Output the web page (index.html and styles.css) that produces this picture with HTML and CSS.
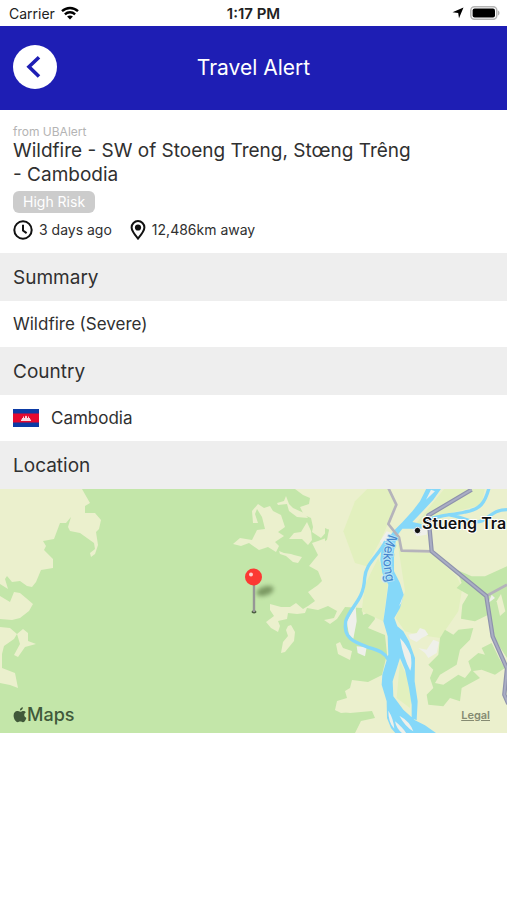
FILE: index.html
```
<!DOCTYPE html>
<html lang="en">
<head>
  <meta charset="UTF-8">
  <meta name="viewport" content="width=device-width, initial-scale=1.0">
  <title>Travel Alert</title>
  <link rel="stylesheet" href="styles.css">
</head>
<body>

  <!-- Status bar -->
  <div class="status-bar">
    <div class="carrier">
      <span>Carrier</span>
      <svg width="18" height="14" viewBox="0 0 18 14" fill="none" stroke="#000" stroke-width="2.4">
        <path d="M1 5.200C5.600.900 12.400.900 17 5.200"/>
        <path d="M3.900 8.300c2.900-2.700 7.300-2.700 10.200 0"/>
        <path d="M9 13.600l-2.900-3c1.700-1.500 4.100-1.500 5.800 0z" fill="#000" stroke="none"/>
      </svg>
    </div>
    <div class="time">1:17 PM</div>
    <div class="indicators">
      <svg width="12" height="12" viewBox="0 0 12 12"><path d="M11.500.5L7 11.300 6.200 6 .5 5.200z" fill="#000"/></svg>
      <svg width="30" height="14" viewBox="0 0 30 14">
        <rect x=".8" y=".8" width="26" height="12.400" rx="3.600" fill="#fff" stroke="#b5b5b5" stroke-width="1.500"/>
        <rect x="2.600" y="2.400" width="22.400" height="9.200" rx="2" fill="#000"/>
        <path d="M28 4.500c2 .8 2 4.200 0 5z" fill="#b5b5b5"/>
      </svg>
    </div>
  </div>

  <!-- Header -->
  <header class="navbar">
    <button class="back-btn" aria-label="Back">
      <svg width="44" height="44" viewBox="0 0 44 44" fill="none" stroke="#1e1eb4" stroke-width="3.600"><path d="M26 12.200L16 21.800l10 9.700"/></svg>
    </button>
    <h1>Travel Alert</h1>
  </header>

  <main>
    <!-- Alert -->
    <section class="alert">
      <p class="source">from UBAlert</p>
      <h2>Wildfire - SW of Stoeng Treng, Stœng Trêng - Cambodia</h2>
      <span class="badge">High Risk</span>
      <div class="meta">
        <div class="meta-item">
          <svg width="20" height="20" viewBox="0 0 20 20" fill="none" stroke="#111" stroke-width="2"><circle cx="10" cy="10" r="8.700"/><path d="M10 4.800v5.700l3.600 2.600"/></svg>
          <span>3 days ago</span>
        </div>
        <div class="meta-item">
          <svg width="16" height="20" viewBox="0 0 16 20"><path d="M8 18.600C5.500 15.600 1.600 11 1.600 7.500a6.400 6.400 0 0 1 12.800 0C14.400 11 10.500 15.600 8 18.600z" fill="none" stroke="#111" stroke-width="2"/><circle cx="8" cy="7.500" r="3.100" fill="#111"/></svg>
          <span>12,486km away</span>
        </div>
      </div>
    </section>

    <h3>Summary</h3>
    <p class="row">Wildfire (Severe)</p>

    <h3>Country</h3>
    <div class="row">
      <svg class="flag" width="26" height="18" viewBox="0 0 26 18">
        <rect width="26" height="18" fill="#0c3ba5"/>
        <rect y="4.500" width="26" height="9" fill="#e5092f"/>
        <path d="M8 12v-1.500h1V9h1V7.500h1V9h1V7.500l1-1 1 1V9h1V7.500h1V9h1v1.500h1V12z" fill="#fff" opacity=".85"/>
      </svg>
      <span>Cambodia</span>
    </div>

    <h3>Location</h3>
    <div class="map">
      <svg class="map-canvas" viewBox="0 0 507 244" preserveAspectRatio="xMidYMid slice">
        <defs>
          <filter id="soft" x="-50%" y="-50%" width="200%" height="200%"><feGaussianBlur stdDeviation="2"/></filter>
          <path id="mekong" d="M389 45C382 62 382 76 387 96"/>
        </defs>
        <rect width="507" height="244" fill="#c3e6a9"/>

        <!-- open land -->
        <g fill="#ebf0cd">
          <path d="M0 0H82L90 14 85 17V24L95 24 101 31 99 40 96 43 98 56 95 65 91 68 90 64 95 60 94 54 80 44 70 42 68 38 71 28 66 34 60 34 54 50 43 52 46 57 44 61 53 70V79L41 81 36 93 32 98 27 97 20 92 12 93 7 87 5 90 8 100 0 95Z"/>
          <path d="M0 107L10 113 14 103 20 104 26 109 33 115 29 122 20 129 12 131 0 130Z"/>
          <path d="M0 138L10 139 17 145 14 150 4 157 2 165V179L15 184 18 199 10 196 0 194Z"/>
          <path d="M17 145L23 140 28 144V152L36 155 25 158 18 168 14 166 20 155Z"/>
          <path d="M253 34L252 22 258 15 264 19 270 17 273 22 281 26 285 38 278 43 284 47 275 53 279 57 276 63 268 58 259 61 249 54 241 57 233 55 240 49 252 51 257 41 265 40 262 28 257 20 255 25 258 34Z"/>
          <path d="M277 14L284 12 286 7 289 15 293 19 304 24 308 29 297 28 289 22 287 15 278 16Z"/>
          <path d="M289 50L294 44 301 43 307 33 311 42 312 51 308 56 302 50Z"/>
          <path d="M279 62L284 64 291 65 294 66 302 68 298 74 293 73 286 67 280 65Z"/>
          <path d="M288 137L291 136 295 143 294 152 285 163 281 164 283 153 288 147 286 141Z"/>
          <path d="M295 0L303 6 310 9 309 15 300 18 304 26 311 29 313 38 312 43 321 49 329 40 326 49 318 52 312 54 318 66 309 77 318 82 322 92 318 96 308 103 315 112 308 117 303 120 296 114 290 118 281 118 270 115 270 121 274 127 266 133 271 139 278 143 280 137 278 132 287 130 288 124 297 125 305 124 307 119 318 121 328 117 337 122 334 129 324 131 330 135 337 130 345 118 362 119 363 126 373 121 375 130 368 139 385 146 387 165 382 186 368 193 352 191 350 199 345 202 347 209 337 212 335 221 350 224 372 222 375 229 361 232 355 244H507V0Z"/>
          <path d="M336 155L340 153 343 159 352 162 350 171 338 165ZM335 221L345 213 352 206V223L341 224Z"/>
        </g>

        <!-- Mekong side, drawn on its own grid -->
        <g transform="translate(325 -1) scale(.3333)">
          <g fill="#e2f0be">
            <path d="M130 0H190L212 50 190 105 170 150 125 235 90 225 55 130 90 40Z"/>
            <path d="M160 210L188 290 175 400 110 370 120 290Z"/>
            <path d="M215 145L230 190 320 195 395 265 412 300 400 370 345 450 280 440 240 430 212 390 240 310Z"/>
            <path d="M360 0H480L470 50 360 80 330 110 270 110Z"/>
            <path d="M225 520L262 600 255 660 215 630Z"/>
          </g>

          <!-- woods -->
          <g fill="#c3e6a9">
            <path d="M395 245L440 265 480 265 546 235V510L520 470 502 440 490 380 450 400 408 392 412 350 430 320 395 300 410 285Z"/>
            <path d="M360 425L385 440 400 425 445 420 435 455 405 485 395 530 345 560 330 585 355 590 400 560 420 570 440 545 465 570 410 600 405 640 375 630 355 655 310 650 305 620 325 600 315 570 325 545 310 530 340 500 345 450Z"/>
            <path d="M430 520L460 495 480 500 470 480 500 465 522 510 540 540 510 560 470 545 440 550Z"/>
            <path d="M0 120L12 125 6 155 0 160Z"/>
          </g>
          <path d="M515 340L528 318 541 370 525 384Z" fill="#ebf0cd"/>

          <!-- built-up land -->
          <g fill="#eff0ea">
            <path d="M250 440L275 435 285 420 300 425 310 440 290 450 275 462 255 452ZM280 480L305 485 325 455 342 462 335 495 310 510 300 495ZM95 475L125 478 120 505 98 495ZM165 160L185 130 200 135 175 175ZM262 125L275 110 310 118 305 140 275 145Z"/>
            <path d="M92 355L65 400 72 440 85 452 95 400ZM500 320L490 345 510 330Z"/>
          </g>

          <!-- rivers -->
          <path fill="#85d8f9" d="M305 0L285 40 262 70 232 103 205 130 170 180 166 215 172 255 190 290 180 365 175 400 188 445 190 500 172 560 170 590 185 640 186 690 198 720 215 740H340L300 712 270 697 235 665 205 625 203 580 225 510 240 545 252 600 260 650 260 690 275 697 278 640 269 580 270 510 252 460 235 430 217 415 208 390 225 360 236 320 225 285 207 250 207 190 215 145 232 122 290 122 290 108 262 102 300 62 325 35 350 0Z"/>
          <g fill="none" stroke="#85d8f9" stroke-linejoin="round">
            <path d="M182 160C160 205 122 225 119 270 116 340 75 355 62 400 54 450 85 462 130 478 165 488 180 495 190 515" stroke-width="10"/>
            <path d="M310 95C350 80 380 82 420 72 465 65 480 45 492 0M370 80C400 85 420 95 440 100 490 110 490 65 546 65" stroke-width="10"/>
          </g>
          <g fill="#eff0ea">
            <path d="M225 450Q245 470 257 500 262 530 256 548 235 510 225 450ZM190 668Q205 690 208 722 190 705 190 668ZM223 683Q255 700 265 730 240 715 223 683ZM303 35L318 5 330 10ZM222 355L235 322 229 345Z"/>
            <path d="M210 700Q235 720 245 738H235Q215 725 210 700Z"/>
          </g>

          <!-- roads -->
          <g fill="none" stroke-linejoin="round">
            <path d="M190 0L214 50 190 108 222 148 230 188 320 190M484 324L546 290" stroke="#b5b3bb" stroke-width="8"/>
            <path d="M440 5L310 82 320 190 484 324 503 445 546 542 538 620 550 648" stroke="#8e92ac" stroke-width="13"/>
            <path d="M440 5L310 82 320 190 484 324 503 445 546 542 538 620 550 648" stroke="#a9adc4" stroke-width="6"/>
          </g>
        </g>
        <circle cx="417.500" cy="41.500" r="3.200" fill="#111" stroke="#fff" stroke-width="1"/>
        <text class="city" x="422" y="40">Stueng Tra</text>
        <text class="river"><textPath href="#mekong">Mekong</textPath></text>

        <!-- pin -->
        <ellipse cx="265" cy="102" rx="9" ry="4.500" fill="#54703e" opacity=".65" transform="rotate(-18 265 102)" filter="url(#soft)"/>
        <ellipse cx="254" cy="123" rx="2.500" ry="1.400" fill="#4c5e42"/>
        <path d="M254 94V123" stroke="#969696" stroke-width="2.400"/>
        <circle cx="253.500" cy="88" r="8.500" fill="#fc3933"/>
        <circle cx="251" cy="85.500" r="2" fill="#ffd0cc"/>
      </svg>
      <div class="map-logo">
        <svg width="14" height="16" viewBox="0 0 14 16" fill="#40593a"><path d="M9.900.300c.1 1.700-1.300 3.200-3 3.200C6.800 1.900 8.200.500 9.900.300zM12.800 5.300c-2.300 1.500-1.900 4.500.6 5.600-.7 2-2 4.300-3.500 4.300-1 0-1.400-.6-2.600-.6s-1.700.6-2.600.6C2.600 15.200.6 11.600.6 8.600c0-2.900 1.800-4.500 3.600-4.500 1.200 0 2 .7 3 .7s1.800-.8 3.200-.8c1 0 1.900.5 2.400 1.300z"/></svg>
        <span>Maps</span>
      </div>
      <a class="legal" href="#">Legal</a>
    </div>
  </main>

</body>
</html>
```
FILE: styles.css
```
/* === RESET & BASE === */
* { margin: 0; padding: 0; box-sizing: border-box; }

:root {
  --primary: #1e1eb4;
  --text: #303030;
  --section: #eee;
}

body {
  font-family: Inter, "Liberation Sans", sans-serif;
  background: #fff;
  color: var(--text);
}

svg { display: block; }

/* === STATUS BAR === */
.status-bar {
  display: grid;
  grid-template-columns: 1fr auto 1fr;
  align-items: center;
  height: 26px;
  padding: 0 7px;
  font-size: 14px;
  color: #222;
}

.carrier,
.indicators {
  display: flex;
  align-items: center;
  gap: 6px;
}

.carrier { padding-left: 2px; }

.indicators { justify-content: flex-end; }

.time {
  font-weight: 600;
  font-size: 15px;
}

/* === HEADER === */
.navbar {
  display: grid;
  grid-template-columns: 44px 1fr 44px;
  align-items: center;
  height: 84px;
  padding: 0 13px 2px;
  background: var(--primary);
  color: #fff;
}

.navbar h1 {
  font-size: 21px;
  font-weight: 400;
  text-align: center;
}

.back-btn {
  width: 44px;
  height: 44px;
  border: none;
  border-radius: 50%;
  background: #fff;
  cursor: pointer;
}

/* === ALERT === */
.alert { padding: 15px 90px 13px 13px; }

.source {
  font-size: 12px;
  line-height: 14px;
  color: #b4b4b4;
}

.alert h2 {
  font-size: 19px;
  font-weight: 400;
  line-height: 24px;
}

.badge {
  display: block;
  width: fit-content;
  margin-top: 4px;
  padding: 0 10px;
  border-radius: 6px;
  background: #ccc;
  color: #fff;
  font-size: 14px;
  line-height: 22px;
}

.meta {
  display: flex;
  gap: 18px;
  margin-top: 7px;
  font-size: 14px;
  line-height: 20px;
}

.meta-item {
  display: flex;
  align-items: center;
  gap: 6px;
  white-space: nowrap;
}

/* === SECTIONS === */
h3 {
  padding: 1px 13px 0;
  background: var(--section);
  font-size: 19px;
  font-weight: 400;
  line-height: 47px;
}

.row {
  display: flex;
  align-items: center;
  gap: 12px;
  padding: 0 13px;
  font-size: 17px;
  line-height: 46px;
}

/* === MAP === */
.map {
  position: relative;
  height: 244px;
}

.map-canvas {
  width: 100%;
  height: 100%;
}

.city {
  font-size: 16px;
  font-weight: 600;
  fill: #111;
  stroke: #fff;
  stroke-width: 2px;
  paint-order: stroke;
}

.river {
  font-size: 13px;
  fill: #4585cc;
  stroke: #b5e3f6;
  stroke-width: 2px;
  paint-order: stroke;
}

.map-logo {
  position: absolute;
  left: 13px;
  bottom: 8px;
  display: flex;
  align-items: center;
  font-size: 18px;
  font-weight: 500;
  color: #40593a;
}

.legal {
  position: absolute;
  right: 17px;
  bottom: 11px;
  font-size: 11px;
  font-weight: 600;
  color: #858b72;
}
```
